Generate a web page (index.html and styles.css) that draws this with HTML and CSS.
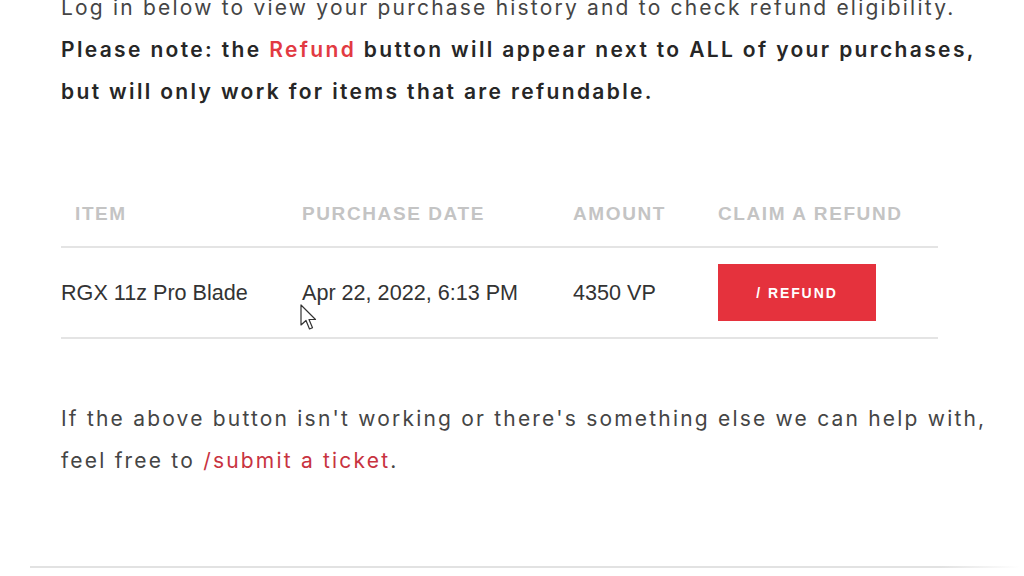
FILE: index.html
```html
<!DOCTYPE html>
<html>
<head>
<meta charset="utf-8">
<link rel="stylesheet" href="styles.css">
</head>
<body>
<main class="page">
  <p class="intro">Log in below to view your purchase history and to check refund eligibility.<br>
  <strong>Please note: the <span class="red">Refund</span> button will appear next to ALL of your purchases,<br>but will only work for items that are refundable.</strong></p>

  <div class="table">
    <div class="row head">
      <div class="cell first">ITEM</div>
      <div class="cell">PURCHASE DATE</div>
      <div class="cell">AMOUNT</div>
      <div class="cell">CLAIM A REFUND</div>
    </div>
    <div class="row body">
      <div class="cell">RGX 11z Pro Blade</div>
      <div class="cell">Apr 22, 2022, 6:13 PM</div>
      <div class="cell">4350 VP</div>
      <div class="cell"><button class="refund">/ REFUND</button></div>
    </div>
  </div>

  <p class="outro">If the above button isn't working or there's something else we can help with,<br>feel free to <a class="link" href="#">/submit a ticket</a>.</p>
</main>
<div class="rule"></div>
<svg class="cursor" width="20" height="28" viewBox="0 0 20 28"><path d="M1 1 L1 21 L6 16.5 L9.5 25 L12.5 23.7 L9 15.5 L15.5 15.5 Z" fill="#fff" stroke="#333" stroke-width="1.2" stroke-linejoin="round"/></svg>
</body>
</html>
```
FILE: styles.css
```css
html, body {
  margin: 0;
  padding: 0;
  background: #fff;
  overflow: hidden;
}
body {
  width: 1024px;
  height: 576px;
  position: relative;
  font-family: "Inter", "Liberation Sans", sans-serif;
}
.page {
  padding-left: 61px;
  width: 960px;
}
.intro {
  margin: -13px 0 0 0;
  font-size: 21px;
  line-height: 42px;
  color: #454545;
  letter-spacing: 2.2px;
  white-space: nowrap;
}
.intro strong {
  color: #262626;
  font-weight: 600;
  letter-spacing: 2.35px;
}
.red { color: #e23a42; }

.table {
  margin-top: 68px;
  width: 877px;
  font-family: "Liberation Sans", Arial, sans-serif;
}
.row {
  display: grid;
  grid-template-columns: 241px 271px 145px 220px;
  align-items: center;
  border-bottom: 2px solid #e4e4e4;
}
.row.head {
  height: 65px;
}
.row.body {
  height: 89px;
}
.head .cell {
  font-size: 19px;
  font-weight: 700;
  color: #c4c4c4;
  letter-spacing: 1.6px;
}
.head .cell.first {
  padding-left: 14px;
}
.body .cell {
  font-size: 21.6px;
  color: #333;
}
.refund {
  width: 158px;
  height: 57px;
  border: none;
  background: #e5323d;
  color: #fff;
  font-family: "Liberation Sans", Arial, sans-serif;
  font-weight: 700;
  font-size: 14px;
  letter-spacing: 1.9px;
  padding: 0;
  display: block;
}
.outro {
  margin: 59px 0 0 0;
  font-size: 21px;
  line-height: 42px;
  color: #454545;
  letter-spacing: 2.2px;
  white-space: nowrap;
}
.link {
  color: #c8333f;
  text-decoration: none;
}
.rule {
  position: absolute;
  left: 30px;
  top: 566px;
  width: 990px;
  height: 2px;
  background: linear-gradient(to right, #e2e2e2 0%, #e2e2e2 92%, rgba(226,226,226,0) 100%);
}
.cursor {
  position: absolute;
  left: 300px;
  top: 304px;
}
```
